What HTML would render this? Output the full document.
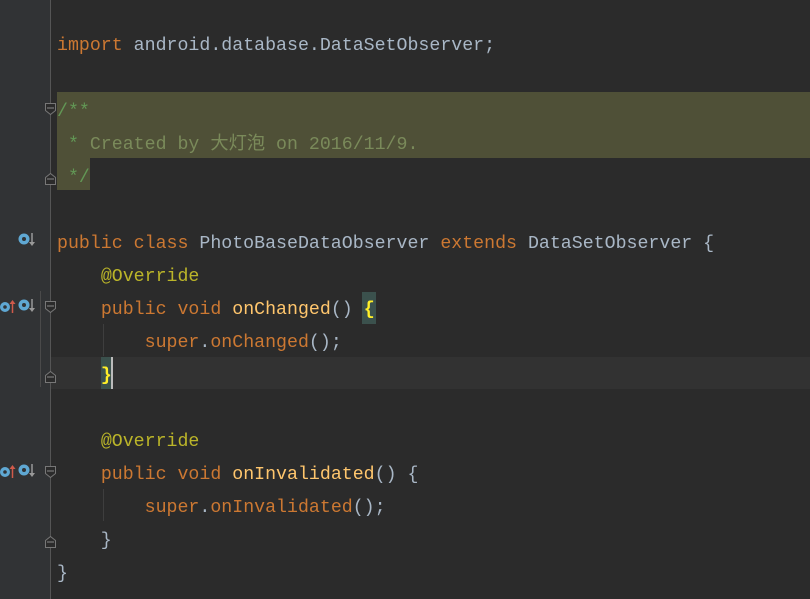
<!DOCTYPE html><html><head><meta charset="utf-8"><style>
body{margin:0;width:810px;height:599px;background:#2b2b2b;overflow:hidden;position:relative;font-family:"Liberation Mono","Noto Sans CJK SC",monospace;font-size:18.25px;}
.g{position:absolute;left:0;top:0;width:50px;height:599px;background:#313335;}
.gl{position:absolute;left:50px;top:0;width:1px;height:599px;background:#555;}
.l{position:absolute;left:57px;height:33px;line-height:33px;white-space:pre;color:#a9b7c6;}
.k{color:#cc7832}.a{color:#bbb529}.f{color:#ffc66d}.c{color:#629755}.cd{color:#7a8a5a}
.hl{position:absolute;background:#4f5037}
</style></head><body>
<div class="g"></div><div class="gl"></div>
<div class="hl" style="left:57px;top:92px;width:753px;height:66px"></div>
<div class="hl" style="left:57px;top:157px;width:33px;height:33px"></div>
<div style="position:absolute;left:51px;top:357px;width:759px;height:32px;background:#323232"></div>
<div style="position:absolute;left:362px;top:292px;width:14px;height:32px;background:#3b514d"></div>
<div style="position:absolute;left:101px;top:357px;width:10px;height:32px;background:#3b514d;border-right:2px solid #bbb"></div>
<div style="position:absolute;left:40px;top:291px;width:1px;height:96px;background:#4a4a4a"></div>
<div style="position:absolute;left:103px;top:324px;width:1px;height:32px;background:#3e3e3e"></div>
<div style="position:absolute;left:103px;top:489px;width:1px;height:32px;background:#3e3e3e"></div>
<svg style="position:absolute;left:0;top:0" width="60" height="599">
<g fill="#2b2b2b" stroke="#777" stroke-width="1">
<path d="M45.5 103.5h10v7l-5 4l-5-4z"/><path d="M45.5 184.5h10v-7l-5-4l-5 4z"/>
<path d="M45.5 301.5h10v7l-5 4l-5-4z"/><path d="M45.5 382.5h10v-7l-5-4l-5 4z"/>
<path d="M45.5 466.5h10v7l-5 4l-5-4z"/><path d="M45.5 547.5h10v-7l-5-4l-5 4z"/>
</g>
<g stroke="#888" stroke-width="1"><path d="M47 108h7M47 179h7M47 306h7M47 377h7M47 471h7M47 542h7"/></g>
<g>
<circle cx="24" cy="239" r="5.5" fill="#5fa8d3"/><circle cx="24" cy="239" r="2" fill="#313335"/><path d="M32 233v10" stroke="#999" stroke-width="1.5"/><path d="M29 242l3 4l3-4z" fill="#999"/>
<circle cx="24" cy="305" r="5.5" fill="#5fa8d3"/><circle cx="24" cy="305" r="2" fill="#313335"/><path d="M32 299v10" stroke="#999" stroke-width="1.5"/><path d="M29 308l3 4l3-4z" fill="#999"/>
<circle cx="5" cy="307" r="5" fill="#5fa8d3"/><circle cx="5" cy="307" r="1.8" fill="#313335"/><path d="M12.5 303v10" stroke="#d05a4a" stroke-width="1.5"/><path d="M9.5 304l3-4l3 4z" fill="#d05a4a"/>
<circle cx="24" cy="470" r="5.5" fill="#5fa8d3"/><circle cx="24" cy="470" r="2" fill="#313335"/><path d="M32 464v10" stroke="#999" stroke-width="1.5"/><path d="M29 473l3 4l3-4z" fill="#999"/>
<circle cx="5" cy="472" r="5" fill="#5fa8d3"/><circle cx="5" cy="472" r="1.8" fill="#313335"/><path d="M12.5 468v10" stroke="#d05a4a" stroke-width="1.5"/><path d="M9.5 469l3-4l3 4z" fill="#d05a4a"/>
</g></svg>
<div class="l" style="top:30px"><span class="k">import</span> android.database.DataSetObserver;</div>
<div class="l c" style="top:96px">/**</div>
<div class="l c" style="top:129px"> * <span class="cd">Created by 大灯泡 on 2016/11/9.</span></div>
<div class="l c" style="top:162px"> */</div>
<div class="l" style="top:228px"><span class="k">public class</span> PhotoBaseDataObserver <span class="k">extends</span> DataSetObserver {</div>
<div class="l" style="top:261px">    <span class="a">@Override</span></div>
<div class="l" style="top:294px">    <span class="k">public void</span> <span class="f">onChanged</span>() <span style="color:#ffef28;font-weight:bold">{</span></div>
<div class="l" style="top:327px">        <span class="k">super</span>.<span style="color:#cc7832">onChanged</span>();</div>
<div class="l" style="top:360px">    <span style="color:#ffef28;font-weight:bold">}</span></div>
<div class="l" style="top:426px">    <span class="a">@Override</span></div>
<div class="l" style="top:459px">    <span class="k">public void</span> <span class="f">onInvalidated</span>() {</div>
<div class="l" style="top:492px">        <span class="k">super</span>.<span style="color:#cc7832">onInvalidated</span>();</div>
<div class="l" style="top:525px">    }</div>
<div class="l" style="top:558px">}</div>
</body></html>
